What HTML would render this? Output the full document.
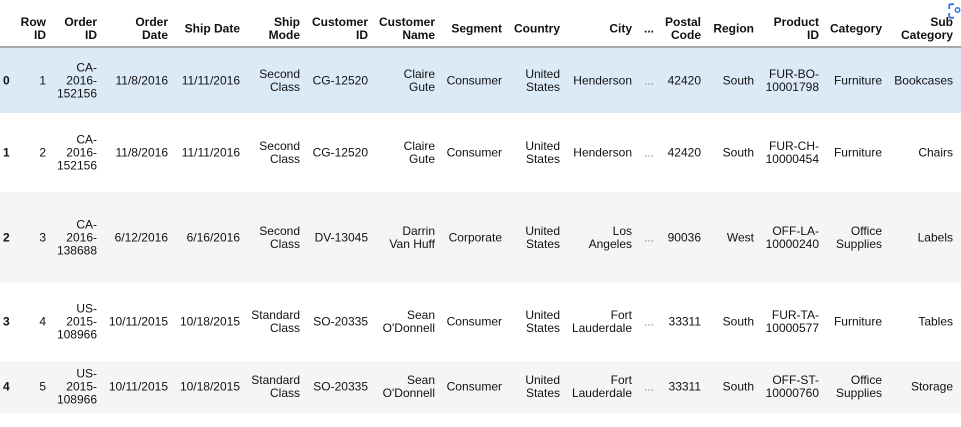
<!DOCTYPE html>
<html><head><meta charset="utf-8"><style>
body{margin:0;width:961px;height:427px;background:#fff;position:relative;overflow:hidden;font-family:"Liberation Sans",Arial,sans-serif;font-size:12px;color:#111;}
.r{position:absolute;left:0;width:961px;}
.c{position:absolute;top:50%;transform:translateY(-50%);text-align:right;line-height:13px;white-space:nowrap;}
.h .c{font-weight:bold;}
.i{font-weight:bold;text-align:left;}
.line{position:absolute;left:0;top:46px;width:961px;height:2px;background:#a9a9a9;}
</style></head><body>
<div id="root"></div>
<div class="line"></div>
<div style="position:absolute;left:946px;top:1px;width:18px;height:18px;border-radius:50%;background:#fff;"></div>
<svg style="position:absolute;left:948px;top:3px" width="14" height="16" viewBox="0 0 14 16"><path d="M1.2 6V3Q1.2 1.2 3 1.2H6M1.2 10v3Q1.2 14.8 3 14.8H6" stroke="#2a7ae2" stroke-width="1.8" fill="none"/><circle cx="9.5" cy="7" r="2.2" stroke="#2a7ae2" stroke-width="1.5" fill="none"/></svg>
<script>
const R=[46,97,168,240,300,368,435,502,560,632,654,701,754,819,882,953];
const hdr=["Row<br>ID","Order<br>ID","Order<br>Date","Ship Date","Ship<br>Mode","Customer<br>ID","Customer<br>Name","Segment","Country","City","...","Postal<br>Code","Region","Product<br>ID","Category","Sub<br>Category"];
const rows=[
[48,65,"#dceaf8","0",["1","CA-<br>2016-<br>152156","11/8/2016","11/11/2016","Second<br>Class","CG-12520","Claire<br>Gute","Consumer","United<br>States","Henderson","...","42420","South","FUR-BO-<br>10001798","Furniture","Bookcases"]],
[113,79,"#fff","1",["2","CA-<br>2016-<br>152156","11/8/2016","11/11/2016","Second<br>Class","CG-12520","Claire<br>Gute","Consumer","United<br>States","Henderson","...","42420","South","FUR-CH-<br>10000454","Furniture","Chairs"]],
[192,91,"#f5f5f5","2",["3","CA-<br>2016-<br>138688","6/12/2016","6/16/2016","Second<br>Class","DV-13045","Darrin<br>Van Huff","Corporate","United<br>States","Los<br>Angeles","...","90036","West","OFF-LA-<br>10000240","Office<br>Supplies","Labels"]],
[283,78,"#fff","3",["4","US-<br>2015-<br>108966","10/11/2015","10/18/2015","Standard<br>Class","SO-20335","Sean<br>O'Donnell","Consumer","United<br>States","Fort<br>Lauderdale","...","33311","South","FUR-TA-<br>10000577","Furniture","Tables"]],
[361,52,"#f5f5f5","4",["5","US-<br>2015-<br>108966","10/11/2015","10/18/2015","Standard<br>Class","SO-20335","Sean<br>O'Donnell","Consumer","United<br>States","Fort<br>Lauderdale","...","33311","South","OFF-ST-<br>10000760","Office<br>Supplies","Storage"]]
];
let h='<div class="r h" style="top:9px;height:40px">';
hdr.forEach((t,k)=>{h+=`<div class="c" style="right:${961-R[k]}px">${t}</div>`});
h+='</div>';
rows.forEach(([t,ht,bg,idx,cells])=>{
 h+=`<div class="r" style="top:${t}px;height:${ht}px;background:${bg}"><div class="c i" style="left:3px">${idx}</div>`;
 cells.forEach((v,k)=>{h+=`<div class="c" style="right:${961-R[k]}px${v==='...'?';color:#888':''}">${v}</div>`});
 h+='</div>';
});
document.getElementById('root').innerHTML=h;
</script>
</body></html>
